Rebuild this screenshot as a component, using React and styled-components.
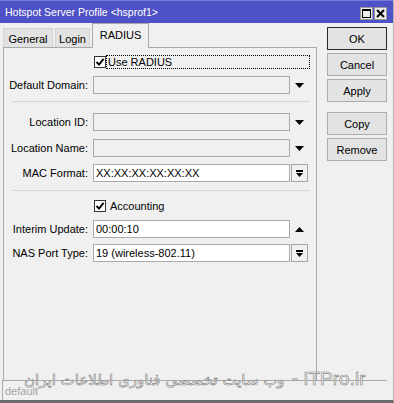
import React from "react";
import styled, { createGlobalStyle } from "styled-components";

const Global = createGlobalStyle`
  html, body { margin: 0; padding: 0; background: #f0f0f0; }
  body {
    font-family: "Liberation Sans", Arial, sans-serif;
    font-size: 11px;
    color: #000;
  }
  * { box-sizing: border-box; }
`;

const Window = styled.div`
  position: relative;
  width: 394px;
  height: 403px;
  background: #f0f0f0;
  display: flex;
  flex-direction: column;
  border-right: 1px solid #b4b4b4;
  border-bottom: 3px solid #6b6b6b;
  overflow: hidden;
`;

const TitleBar = styled.div`
  height: 23px;
  flex: none;
  background: #4f52c6;
  border-top: 1px solid #7b7de0;
  color: #fff;
  display: flex;
  align-items: center;
  justify-content: space-between;
  padding: 0 6px 0 5px;
`;

const TitleText = styled.span`
  font-size: 10.5px;
  line-height: 1;
  margin-top: 1px;
`;

const TitleButtons = styled.div`
  display: flex;
  gap: 1px;
  margin-top: 3px;
`;

const TitleButton = styled.div`
  width: 13px;
  height: 13px;
  background: #ececec;
  border: 1px solid #9a9a9a;
  display: flex;
  align-items: center;
  justify-content: center;
`;

const Main = styled.div`
  flex: 1;
  display: flex;
  min-height: 0;
`;

const Left = styled.div`
  width: 314px;
  margin-left: 3px;
  display: flex;
  flex-direction: column;
`;

const Tabs = styled.div`
  height: 24px;
  flex: none;
  display: flex;
  align-items: flex-end;
  gap: 1px;
  position: relative;
  z-index: 1;
`;

const Tab = styled.div`
  width: ${(p) => p.$w}px;
  height: ${(p) => (p.$active ? 25 : 19)}px;
  margin-left: ${(p) => p.$ml || 0}px;
  margin-bottom: ${(p) => (p.$active ? -1 : 0)}px;
  background: ${(p) => (p.$active ? "#f0f0f0" : "#e2e2e2")};
  border: 1px solid ${(p) => (p.$active ? "#a9a9a9" : "#d3d3d3")};
  border-bottom: none;
  display: flex;
  align-items: center;
  justify-content: center;
  padding-top: ${(p) => (p.$active ? 0 : 1)}px;
  padding-bottom: ${(p) => (p.$active ? 3 : 0)}px;
  font-size: 11px;
`;

const Panel = styled.div`
  flex: 1;
  border: 1px solid #a9a9a9;
  border-bottom: none;
  background: #f0f0f0;
  display: flex;
  flex-direction: column;
  padding: 7px 0 0 0;
`;

const Row = styled.div`
  display: flex;
  align-items: center;
  height: 18px;
  margin-top: ${(p) => p.$mt || 0}px;
`;

const Label = styled.div`
  width: 84px;
  margin-right: 5px;
  text-align: right;
  white-space: nowrap;
  font-size: 11px;
`;

const Field = styled.div`
  width: 197px;
  height: 18px;
  border: 1px solid #a9a9a9;
  background: ${(p) => (p.$white ? "#ffffff" : "#f0f0f0")};
  padding-left: 2px;
  display: flex;
  align-items: center;
  font-size: 11px;
  white-space: nowrap;
  overflow: hidden;
`;

const Side = styled.div`
  width: 17px;
  height: 18px;
  margin-left: 1px;
  display: flex;
  align-items: center;
  justify-content: center;
  border: 1px solid ${(p) => (p.$boxed ? "#a4a4a4" : "transparent")};
  background: ${(p) => (p.$boxed ? "#f0f0f0" : "transparent")};
`;

const CheckRow = styled.div`
  display: flex;
  align-items: center;
  height: 14px;
  padding-left: 90px;
  margin-top: ${(p) => p.$mt || 0}px;
`;

const CheckBox = styled.div`
  width: 12px;
  height: 12px;
  border: 1px solid #333;
  background: #fff;
  display: flex;
  align-items: center;
  justify-content: center;
  flex: none;
`;

const CheckLabel = styled.div`
  width: 204px;
  height: 14px;
  border: 1px dotted ${(p) => (p.$focus ? "#000" : "transparent")};
  padding-left: ${(p) => (p.$focus ? 1 : 3)}px;
  display: flex;
  align-items: center;
  font-size: 11px;
  white-space: nowrap;
`;

const Separator = styled.div`
  height: 1px;
  background: #d4d4d4;
  margin: ${(p) => p.$mt || 0}px 6px 0 8px;
`;

const Right = styled.div`
  width: 60px;
  margin-left: 10px;
  padding-top: 4px;
  display: flex;
  flex-direction: column;
  gap: 3px;
`;

const Button = styled.div`
  height: 23px;
  margin-top: ${(p) => p.$mt || 0}px;
  background: #e3e3e3;
  border: 1px solid ${(p) => (p.$default ? "#2a2a2a" : "#adadad")};
  display: flex;
  align-items: center;
  justify-content: center;
  font-size: 11px;
`;

const StatusBar = styled.div`
  height: 20px;
  flex: none;
  margin: 0 6px 0 2px;
  border-top: 1px solid #a9a9a9;
  border-left: 1px solid #a9a9a9;
  padding-left: 2px;
  display: flex;
  align-items: center;
  color: #a4a4a4;
  font-size: 11px;
`;

const Watermark = styled.div`
  position: absolute;
  left: 24px;
  top: 368px;
  white-space: nowrap;
  direction: ltr;
  display: flex;
  align-items: baseline;
  gap: 7px;
  color: rgba(240, 240, 240, 0.85);
  -webkit-text-stroke: 0.6px #858585;
  pointer-events: none;
`;

const WatermarkFa = styled.span`
  font-family: "DejaVu Sans", sans-serif;
  font-size: 15px;
`;

const WatermarkEn = styled.span`
  font-family: "Liberation Sans", sans-serif;
  font-size: 19px;
`;

const DownArrow = () => (
  <svg width="9" height="5" viewBox="0 0 9 5">
    <polygon points="0,0 9,0 4.5,5" fill="#000" />
  </svg>
);

const UpArrow = () => (
  <svg width="9" height="5" viewBox="0 0 9 5">
    <polygon points="0,5 9,5 4.5,0" fill="#000" />
  </svg>
);

const BarDown = () => (
  <svg width="7" height="7" viewBox="0 0 7 7">
    <rect x="0" y="0" width="7" height="2" fill="#000" />
    <polygon points="0,3 7,3 3.5,7" fill="#000" />
  </svg>
);

const Check = () => (
  <svg width="10" height="10" viewBox="0 0 10 10">
    <path d="M1.5 5 L4 7.6 L8.6 1.8" fill="none" stroke="#000" strokeWidth="1.9" />
  </svg>
);

export default function App() {
  return (
    <>
      <Global />
      <Window>
        <TitleBar>
          <TitleText>Hotspot Server Profile &lt;hsprof1&gt;</TitleText>
          <TitleButtons>
            <TitleButton>
              <svg width="9" height="9" viewBox="0 0 9 9">
                <rect x="0.5" y="0.5" width="8" height="8" fill="none" stroke="#000" />
                <rect x="0" y="0" width="9" height="2" fill="#000" />
              </svg>
            </TitleButton>
            <TitleButton>
              <svg width="9" height="9" viewBox="0 0 9 9">
                <path d="M1 1 L8 8 M8 1 L1 8" stroke="#000" strokeWidth="2" />
              </svg>
            </TitleButton>
          </TitleButtons>
        </TitleBar>
        <Main>
          <Left>
            <Tabs>
              <Tab $w={50}>General</Tab>
              <Tab $w={35} $ml={1}>Login</Tab>
              <Tab $w={57} $active $ml={1}>RADIUS</Tab>
            </Tabs>
            <Panel>
              <CheckRow>
                <CheckBox><Check /></CheckBox>
                <CheckLabel $focus>Use RADIUS</CheckLabel>
              </CheckRow>
              <Row $mt={7}>
                <Label>Default Domain:</Label>
                <Field />
                <Side><DownArrow /></Side>
              </Row>
              <Separator $mt={7} />
              <Row $mt={11}>
                <Label>Location ID:</Label>
                <Field />
                <Side><DownArrow /></Side>
              </Row>
              <Row $mt={8}>
                <Label>Location Name:</Label>
                <Field />
                <Side><DownArrow /></Side>
              </Row>
              <Row $mt={7}>
                <Label>MAC Format:</Label>
                <Field $white>XX:XX:XX:XX:XX:XX</Field>
                <Side $boxed><BarDown /></Side>
              </Row>
              <Separator $mt={8} />
              <CheckRow $mt={8}>
                <CheckBox><Check /></CheckBox>
                <CheckLabel>Accounting</CheckLabel>
              </CheckRow>
              <Row $mt={7}>
                <Label>Interim Update:</Label>
                <Field $white>00:00:10</Field>
                <Side><UpArrow /></Side>
              </Row>
              <Row $mt={6}>
                <Label>NAS Port Type:</Label>
                <Field $white>19 (wireless-802.11)</Field>
                <Side $boxed><BarDown /></Side>
              </Row>
            </Panel>
          </Left>
          <Right>
            <Button $default>OK</Button>
            <Button>Cancel</Button>
            <Button>Apply</Button>
            <Button $mt={7}>Copy</Button>
            <Button>Remove</Button>
          </Right>
        </Main>
        <StatusBar>default</StatusBar>
        <Watermark>
          <WatermarkFa>وب سایت تخصصی فناوری اطلاعات ایران</WatermarkFa>
          <WatermarkEn>- ITPro.ir</WatermarkEn>
        </Watermark>
      </Window>
    </>
  );
}
